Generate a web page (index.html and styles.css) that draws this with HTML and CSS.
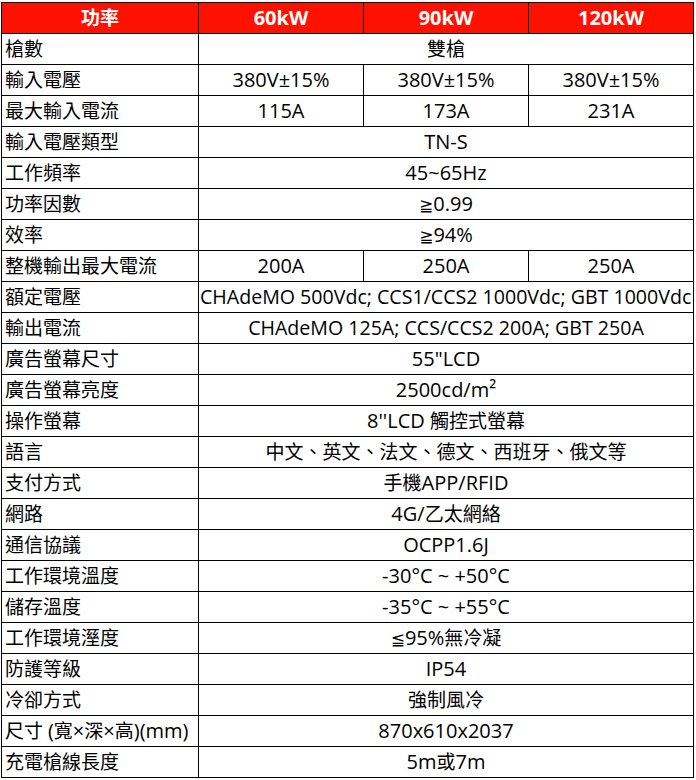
FILE: index.html
```html
<!DOCTYPE html>
<html lang="zh-Hant">
<head>
<meta charset="utf-8">
<title>規格表</title>
<link rel="stylesheet" href="styles.css">
</head>
<body>
<div class="wrap">
<table class="spec">
<colgroup><col class="c1"><col class="c2"><col class="c2"><col class="c2"></colgroup>
<thead>
<tr><th class="hk">功率</th><th>60kW</th><th>90kW</th><th>120kW</th></tr>
</thead>
<tbody>
<tr><td class="k">槍數</td><td colspan="3" class="zh">雙槍</td></tr>
<tr><td class="k">輸入電壓</td><td>380V±15%</td><td>380V±15%</td><td>380V±15%</td></tr>
<tr><td class="k">最大輸入電流</td><td>115A</td><td>173A</td><td>231A</td></tr>
<tr><td class="k">輸入電壓類型</td><td colspan="3">TN-S</td></tr>
<tr><td class="k">工作頻率</td><td colspan="3">45~65Hz</td></tr>
<tr><td class="k">功率因數</td><td colspan="3"><span class="sym">≧</span>0.99</td></tr>
<tr><td class="k">效率</td><td colspan="3"><span class="sym">≧</span>94%</td></tr>
<tr><td class="k">整機輸出最大電流</td><td>200A</td><td>250A</td><td>250A</td></tr>
<tr><td class="k">額定電壓</td><td colspan="3" class="over"><div class="clip">CHAdeMO 500Vdc; CCS1/CCS2 1000Vdc; GBT 1000Vdc</div></td></tr>
<tr><td class="k">輸出電流</td><td colspan="3" class="long">CHAdeMO 125A; CCS/CCS2 200A; GBT 250A</td></tr>
<tr><td class="k">廣告螢幕尺寸</td><td colspan="3">55"LCD</td></tr>
<tr><td class="k">廣告螢幕亮度</td><td colspan="3">2500cd/m²</td></tr>
<tr><td class="k">操作螢幕</td><td colspan="3">8''LCD <span class="zh">觸控式螢幕</span></td></tr>
<tr><td class="k">語言</td><td colspan="3" class="zh">中文、英文、法文、德文、西班牙、俄文等</td></tr>
<tr><td class="k">支付方式</td><td colspan="3"><span class="zh">手機</span>APP/RFID</td></tr>
<tr><td class="k">網路</td><td colspan="3">4G/<span class="zh">乙太網絡</span></td></tr>
<tr><td class="k">通信協議</td><td colspan="3">OCPP1.6J</td></tr>
<tr><td class="k">工作環境溫度</td><td colspan="3">-30°C ~ +50°C</td></tr>
<tr><td class="k">儲存溫度</td><td colspan="3">-35°C ~ +55°C</td></tr>
<tr><td class="k">工作環境溼度</td><td colspan="3"><span class="sym">≦</span>95%<span class="zh">無冷凝</span></td></tr>
<tr><td class="k">防護等級</td><td colspan="3">IP54</td></tr>
<tr><td class="k">冷卻方式</td><td colspan="3" class="zh">強制風冷</td></tr>
<tr><td class="k">尺寸 <span class="lat">(</span>寬<span class="lat">×</span>深<span class="lat">×</span>高<span class="lat">)(mm)</span></td><td colspan="3">870x610x2037</td></tr>
<tr><td class="k">充電槍線長度</td><td colspan="3">5m<span class="zh">或</span>7m</td></tr>
</tbody>
</table>
</div>
</body>
</html>
```
FILE: styles.css
```css
html, body {
  margin: 0;
  padding: 0;
  background: #ffffff;
}
.wrap {
  padding: 2px 0 0 1px;
}
.spec {
  border-collapse: collapse;
  table-layout: fixed;
  width: 693px;
  font-family: "Open Sans", "Noto Sans CJK TC", sans-serif;
  font-size: 20px;
  color: #000;
}
.c1 { width: 197px; }
.c2 { width: 165px; }
.spec th, .spec td {
  border: 1px solid #000;
  padding: 0;
  line-height: 30px;
  text-align: center;
  white-space: nowrap;
  overflow: hidden;
}
.spec span {
  line-height: 1;
}
.spec th {
  background: #ff1100;
  color: #fff;
  font-weight: bold;
}
.spec th.hk {
  font-size: 19px;
}
.spec td.k {
  text-align: left;
  padding-left: 3px;
  font-size: 19px;
}
.spec td.k .lat {
  font-size: 20px;
}
.spec td.zh, .zh {
  font-size: 19px;
}
.sym {
  font-family: "DejaVu Sans", sans-serif;
  font-size: 17px;
}
.spec td.long {
  font-size: 19.6px;
}
.spec td.over {
  text-align: left;
  font-size: 19.6px;
}
.clip {
  overflow: hidden;
  white-space: nowrap;
  padding-left: 1px;
  height: 30px;
}
```
